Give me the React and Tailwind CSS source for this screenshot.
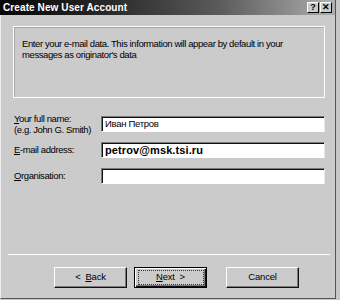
import React from 'react';

const font = { fontFamily: '"Liberation Sans", Arial, sans-serif' };

const Field = ({ children, bold }) => (
  <div
    className={`w-[224px] h-[16px] bg-white border border-t-[#7a7a7a] border-l-[#7a7a7a] border-b-white border-r-[#e8e8e8] shadow-[inset_1px_1px_0_#111] flex items-center pl-[3px] text-black ${
      bold ? 'text-[11px] font-bold tracking-[0.1px]' : 'text-[9.5px] tracking-[-0.3px]'
    }`}
  >
    {children}
  </div>
);

const Button = ({ children, primary }) => (
  <div
    className={`w-[73px] h-[21px] bg-[#cbcbcb] flex items-center justify-center text-[9.5px] tracking-[-0.2px] text-black ${
      primary
        ? 'border border-black shadow-[inset_1px_1px_0_#fff,inset_-1px_-1px_0_#111,inset_-2px_-2px_0_#7a7a7a]'
        : 'border border-t-white border-l-white border-b-[#111] border-r-[#111] shadow-[inset_-1px_-1px_0_#7a7a7a]'
    }`}
  >
    {primary ? (
      <div className="w-[66px] h-[15px] border border-dotted border-[#333] flex items-center justify-center">
        {children}
      </div>
    ) : (
      children
    )}
  </div>
);

const TitleButton = ({ children }) => (
  <div className="w-[12px] h-[11px] bg-[#cbcbcb] border border-t-white border-l-white border-b-black border-r-black flex items-center justify-center text-[9px] font-bold leading-none text-black">
    {children}
  </div>
);

export default function App() {
  return (
    <div className="w-[340px] h-[300px] bg-[#c6c6c6] overflow-hidden" style={font}>
      <div className="w-[336px] h-[299px] flex flex-col bg-[#cbcbcb] border-l border-l-[#eeeeee] border-r border-r-[#555] border-b border-b-[#555]">
        {/* title bar */}
        <div className="h-[15px] -ml-px flex items-center justify-between pl-[3px] pr-[3px] bg-[linear-gradient(to_right,#050505,#262626_30%,#5a5a5a_65%,#8a8a8a_85%,#b0b0b0)]">
          <span className="text-white text-[10px] font-bold tracking-[0.1px]">Create New User Account</span>
          <div className="flex gap-[1px]">
            <TitleButton>?</TitleButton>
            <TitleButton>✕</TitleButton>
          </div>
        </div>

        {/* info panel */}
        <div className="ml-[12px] mt-[11px] w-[312px] h-[72px] border border-white shadow-[inset_1px_1px_0_#a8a8a8] pt-[11px] pl-[8px] text-[9.5px] leading-[11px] tracking-[-0.4px] text-black">
          Enter your e-mail data. This information will appear by default in your
          <br />
          messages as originator's data
        </div>

        {/* form */}
        <div className="mt-[13px] flex flex-col text-[9.5px] tracking-[-0.4px] text-black">
          <div className="h-[26px] flex items-center">
            <div className="ml-[13px] w-[87px] leading-[11px]">
              <span className="underline">Y</span>our full name:
              <br />
              (e.g. John G. Smith)
            </div>
            <Field>Иван Петров</Field>
          </div>
          <div className="h-[26px] flex items-center">
            <div className="ml-[13px] w-[87px]">
              <span className="underline">E</span>-mail address:
            </div>
            <Field bold>petrov@msk.tsi.ru</Field>
          </div>
          <div className="h-[26px] flex items-center">
            <div className="ml-[13px] w-[87px]">
              <span className="underline">O</span>rganisation:
            </div>
            <Field />
          </div>
        </div>

        {/* separator */}
        <div className="mt-[65px] ml-[7px] w-[322px] h-px bg-white" />

        {/* buttons */}
        <div className="mt-[12px] ml-[53px] flex">
          <Button>
            &lt;&nbsp;&nbsp;<span className="underline">B</span>ack
          </Button>
          <div className="ml-[7px]">
            <Button primary>
              <span className="underline">N</span>ext&nbsp;&nbsp;&gt;
            </Button>
          </div>
          <div className="ml-[19px]">
            <Button>Cancel</Button>
          </div>
        </div>
      </div>
    </div>
  );
}
